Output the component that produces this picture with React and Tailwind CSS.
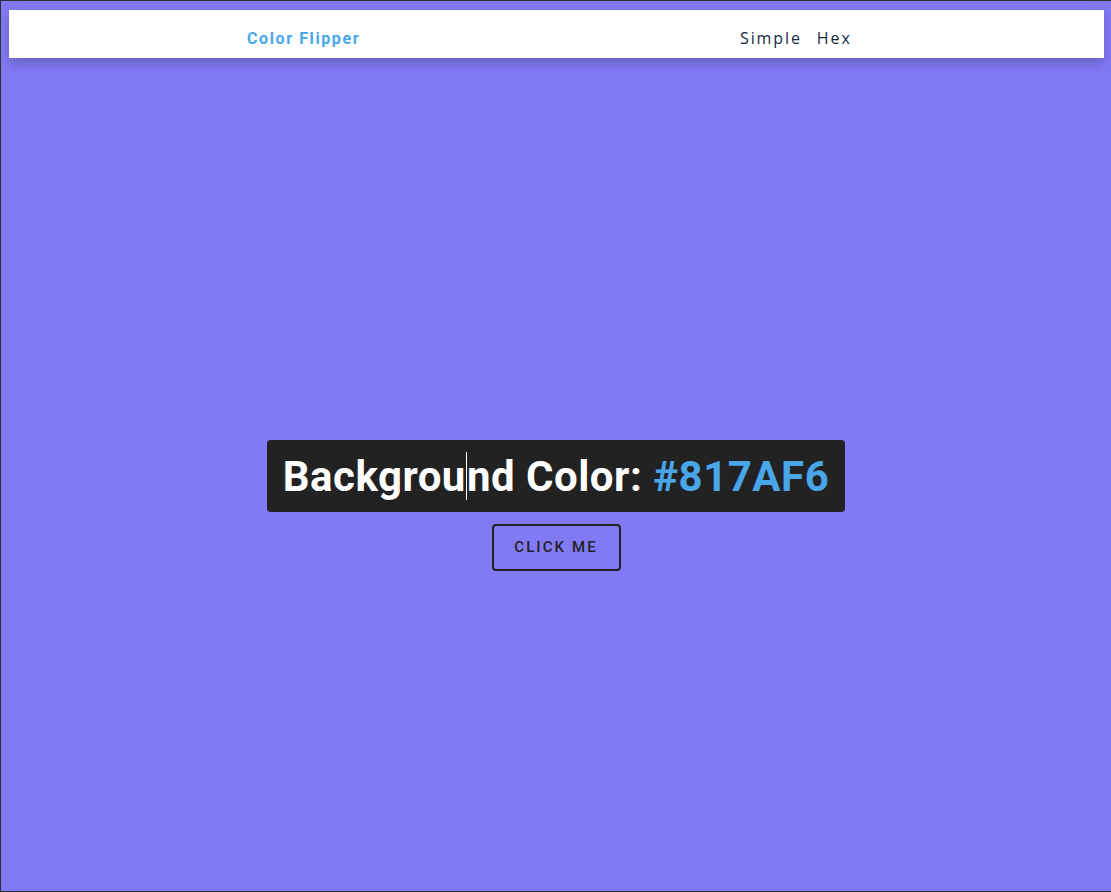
export default function App() {
  return (
    <div className="w-[1111px] h-[892px] bg-[#817af6] border-t border-l border-b border-[#2f2f2f] flex flex-col overflow-hidden">
      <nav className="mt-[9px] ml-[8px] mr-[7px] h-[48px] bg-white shadow-[0_5px_12px_rgba(0,0,0,0.22)] flex items-center">
        <div className="pl-[238px] pt-[10px] w-[731px] text-[16px] font-bold tracking-[1.6px] text-[#49a6e9] whitespace-nowrap" style={{ fontFamily: "Roboto, 'Liberation Sans', sans-serif" }}>
          Color Flipper
        </div>
        <div className="flex gap-[15px] pt-[7px] text-[16px] tracking-[1.9px] text-[#102a42]" style={{ fontFamily: "'Open Sans', 'Liberation Sans', sans-serif" }}>
          <a>Simple</a>
          <a>Hex</a>
        </div>
      </nav>
      <main className="flex flex-col items-center pt-[382px]" style={{ fontFamily: "Roboto, 'Liberation Sans', sans-serif" }}>
        <h2 className="h-[72px] px-[16px] bg-[#222222] rounded-[4px] flex items-center text-[42px] font-bold tracking-[0.5px] text-white whitespace-nowrap">
          <span>Backgrou</span>
          <span className="inline-block w-0 h-[48px] border-l border-white"></span>
          <span>nd Color:&nbsp;</span>
          <span className="text-[#49a6e9]">#817AF6</span>
        </h2>
        <button className="mt-[12px] w-[129px] h-[47px] border-2 border-[#222222] rounded-[4px] text-[15px] font-medium tracking-[2.1px] text-[#222222] uppercase">
          click me
        </button>
      </main>
    </div>
  );
}
